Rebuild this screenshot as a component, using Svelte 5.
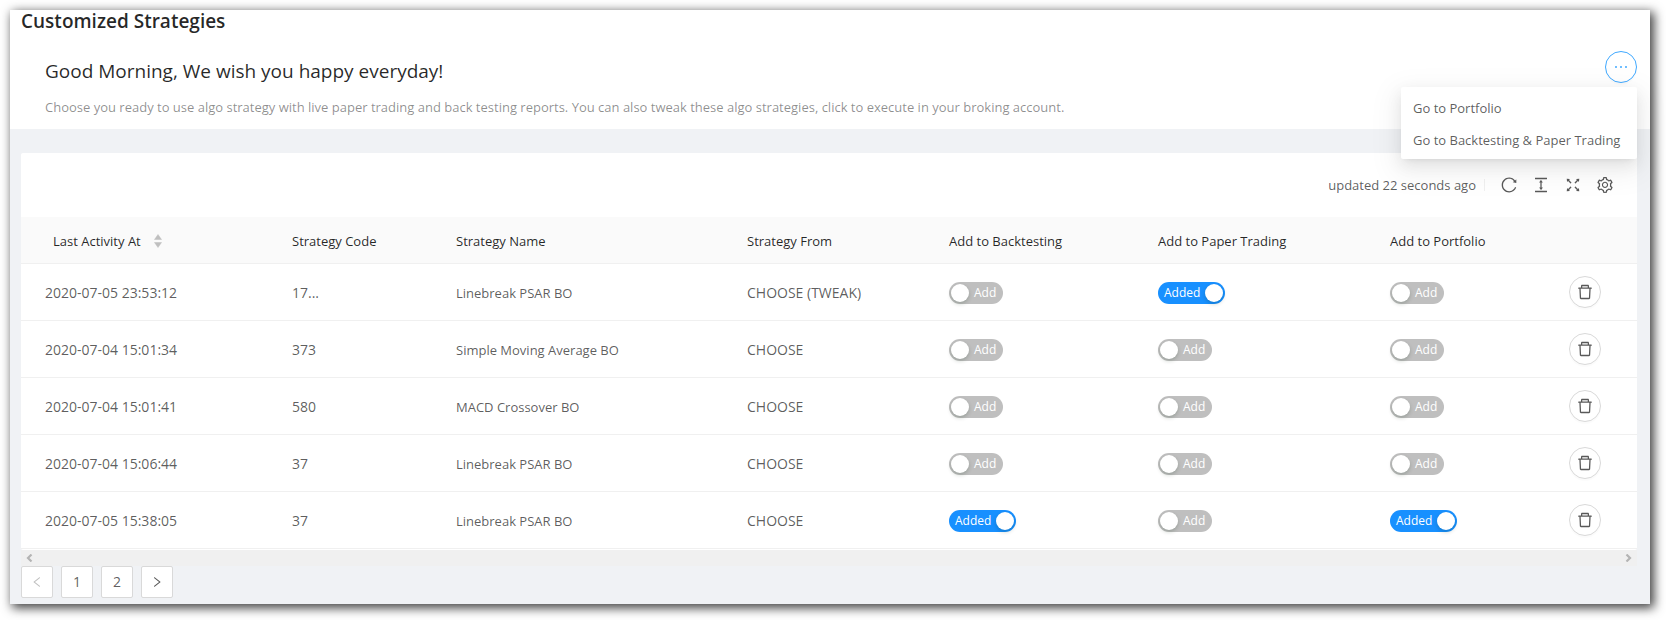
<script>
  const icons = {
    more: 'M176 511a56 56 0 10112 0 56 56 0 10-112 0zm280 0a56 56 0 10112 0 56 56 0 10-112 0zm280 0a56 56 0 10112 0 56 56 0 10-112 0z',
    trash: 'M360 184h-8c4.4 0 8-3.6 8-8v8h304v-8c0 4.4 3.6 8 8 8h-8v72h72v-80c0-35.3-28.7-64-64-64H352c-35.3 0-64 28.7-64 64v80h72v-72zm504 72H160c-17.7 0-32 14.3-32 32v32c0 4.4 3.6 8 8 8h60.4l24.7 523c1.6 34.1 29.8 61 63.9 61h454c34.2 0 62.3-26.8 63.9-61l24.7-523H888c4.4 0 8-3.6 8-8v-32c0-17.7-14.3-32-32-32zM731.3 840H292.7l-24.2-512h487l-24.2 512z',
    left: 'M724 218.3V141c0-6.7-7.7-10.4-12.9-6.3L260.3 486.8a31.86 31.86 0 000 50.3l450.8 352.1c5.3 4.1 12.9.4 12.9-6.3v-77.3c0-4.9-2.3-9.6-6.1-12.6l-360-281 360-281.1c3.8-3 6.1-7.7 6.1-12.6z',
    right: 'M765.7 486.8L314.9 134.7A7.97 7.97 0 00302 141v77.3c0 4.9 2.3 9.6 6.1 12.6l360 281.1-360 281.1c-3.9 3-6.1 7.7-6.1 12.6V883c0 6.7 7.7 10.4 12.9 6.3l450.8-352.1a31.96 31.96 0 000-50.4z'
  };

  const tools = [
    { label: 'Reload', d: 'M909.1 209.3l-56.4 44.1C775.8 155.1 656.2 92 521.9 92 290 92 102.3 279.5 102 511.5 101.7 743.7 289.8 932 521.9 932c181.3 0 335.8-115 394.6-276.1 1.5-4.2-.7-8.9-4.9-10.3l-56.7-19.5a8 8 0 00-10.1 4.8c-1.8 5-3.8 10-5.9 14.9-17.3 41-42.1 77.8-73.7 109.4A344.77 344.77 0 01655.9 829c-42.3 17.9-87.4 27-133.8 27-46.5 0-91.5-9.1-133.8-27A341.5 341.5 0 01279 755.2a342.16 342.16 0 01-73.7-109.4c-17.9-42.4-27-87.4-27-133.9s9.1-91.5 27-133.9c17.3-41 42.1-77.8 73.7-109.4 31.6-31.6 68.4-56.4 109.3-73.8 42.3-17.9 87.4-27 133.8-27 46.5 0 91.5 9.1 133.8 27a341.5 341.5 0 01109.3 73.8c9.9 9.9 19.2 20.4 27.8 31.4l-60.2 47a8 8 0 003 14.1l175.6 43c5 1.2 9.9-2.6 9.9-7.7l.8-180.9c-.1-6.6-7.8-10.3-13-6.2z' },
    { label: 'Density', d: 'M840 836H184c-4.4 0-8 3.6-8 8v60c0 4.4 3.6 8 8 8h656c4.4 0 8-3.6 8-8v-60c0-4.4-3.6-8-8-8zm0-724H184c-4.4 0-8 3.6-8 8v60c0 4.4 3.6 8 8 8h656c4.4 0 8-3.6 8-8v-60c0-4.4-3.6-8-8-8zM610.8 378c6 0 9.4-7 5.7-11.7L515.7 238.7a7.14 7.14 0 00-11.3 0L403.6 366.3a7.23 7.23 0 005.7 11.7H476v268h-62.8c-6 0-9.4 7-5.7 11.7l100.8 127.5c2.9 3.7 8.5 3.7 11.3 0l100.8-127.5c3.7-4.7.4-11.7-5.7-11.7H548V378h62.8z' },
    { label: 'Full screen', d: 'M290 236.4l43.9-43.9a8.01 8.01 0 00-4.7-13.6L169 160c-5.1-.6-9.5 3.7-8.9 8.9L179 329.1c.8 6.6 8.9 9.4 13.6 4.7l43.7-43.7L370 423.7c3.1 3.1 8.2 3.1 11.3 0l42.4-42.3c3.1-3.1 3.1-8.2 0-11.3L290 236.4zm352.7 187.3c3.1 3.1 8.2 3.1 11.3 0l133.7-133.6 43.7 43.7a8.01 8.01 0 0013.6-4.7L863.9 169c.6-5.1-3.7-9.5-8.9-8.9L694.8 179c-6.6.8-9.4 8.9-4.7 13.6l43.9 43.9L600.3 370a8.03 8.03 0 000 11.3l42.4 42.4zM845 694.9c-.8-6.6-8.9-9.4-13.6-4.7l-43.7 43.7L654 600.3a8.03 8.03 0 00-11.3 0l-42.4 42.3a8.03 8.03 0 000 11.3L734 787.6l-43.9 43.9a8.01 8.01 0 004.7 13.6L855 864c5.1.6 9.5-3.7 8.9-8.9L845 694.9zm-463.7-94.6a8.03 8.03 0 00-11.3 0L236.3 733.9l-43.7-43.7a8.01 8.01 0 00-13.6 4.7L160.1 855c-.6 5.1 3.7 9.5 8.9 8.9L329.2 845c6.6-.8 9.4-8.9 4.7-13.6L290 787.6 423.7 654c3.1-3.1 3.1-8.2 0-11.3l-42.4-42.4z' },
    { label: 'Settings', d: 'M924.8 625.7l-65.5-56c3.1-19 4.7-38.4 4.7-57.8s-1.6-38.8-4.7-57.8l65.5-56a32.03 32.03 0 009.3-35.2l-.9-2.6a443.74 443.74 0 00-79.7-137.9l-1.8-2.1a32.12 32.12 0 00-35.1-9.5l-81.3 28.9c-30-24.6-63.5-44-99.7-57.6l-15.7-85a32.05 32.05 0 00-25.8-25.7l-2.7-.5c-52.1-9.4-106.9-9.4-159 0l-2.7.5a32.05 32.05 0 00-25.8 25.7l-15.8 85.4a351.86 351.86 0 00-99 57.4l-81.9-29.1a32 32 0 00-35.1 9.5l-1.8 2.1a446.02 446.02 0 00-79.7 137.9l-.9 2.6c-4.5 12.5-.8 26.5 9.3 35.2l66.3 56.6c-3.1 18.8-4.6 38-4.6 57.1 0 19.2 1.5 38.4 4.6 57.1L99 625.5a32.03 32.03 0 00-9.3 35.2l.9 2.6c18.1 50.4 44.9 96.9 79.7 137.9l1.8 2.1a32.12 32.12 0 0035.1 9.5l81.9-29.1c29.8 24.5 63.1 43.9 99 57.4l15.8 85.4a32.05 32.05 0 0025.8 25.7l2.7.5a449.4 449.4 0 00159 0l2.7-.5a32.05 32.05 0 0025.8-25.7l15.7-85a350 350 0 0099.7-57.6l81.3 28.9a32 32 0 0035.1-9.5l1.8-2.1c34.8-41.1 61.6-87.5 79.7-137.9l.9-2.6c4.5-12.3.8-26.3-9.3-35zM788.3 465.9c2.5 15.1 3.8 30.6 3.8 46.1s-1.3 31-3.8 46.1l-6.6 40.1 74.7 63.9a370.03 370.03 0 01-42.6 73.6L721 702.8l-31.4 25.8c-23.9 19.6-50.5 35-79.3 45.8l-38.1 14.3-17.9 97a377.5 377.5 0 01-85 0l-17.9-97.2-37.8-14.5c-28.5-10.8-55-26.2-78.7-45.7l-31.4-25.9-93.4 33.2c-17-22.9-31.2-47.6-42.6-73.6l75.5-64.5-6.5-40c-2.4-14.9-3.7-30.3-3.7-45.5 0-15.3 1.2-30.6 3.7-45.5l6.5-40-75.5-64.5c11.3-26.1 25.6-50.7 42.6-73.6l93.4 33.2 31.4-25.9c23.7-19.5 50.2-34.9 78.7-45.7l37.9-14.3 17.9-97.2c28.1-3.2 56.8-3.2 85 0l17.9 97 38.1 14.3c28.7 10.8 55.4 26.2 79.3 45.8l31.4 25.8 92.8-32.9c17 22.9 31.2 47.6 42.6 73.6L781.8 426l6.5 39.9zM512 326c-97.2 0-176 78.8-176 176s78.8 176 176 176 176-78.8 176-176-78.8-176-176-176zm79.2 255.2A111.6 111.6 0 01512 614c-29.9 0-58-11.7-79.2-32.8A111.6 111.6 0 01400 502c0-29.9 11.7-58 32.8-79.2C454 401.6 482.1 390 512 390c29.9 0 58 11.6 79.2 32.8A111.6 111.6 0 01624 502c0 29.9-11.7 58-32.8 79.2z' }
  ];

  const targets = ['Backtesting', 'Paper Trading', 'Portfolio'];

  let rows = $state([
    { at: '2020-07-05 23:53:12', code: '17...', name: 'Linebreak PSAR BO', from: 'CHOOSE (TWEAK)', added: [false, true, false] },
    { at: '2020-07-04 15:01:34', code: '373', name: 'Simple Moving Average BO', from: 'CHOOSE', added: [false, false, false] },
    { at: '2020-07-04 15:01:41', code: '580', name: 'MACD Crossover BO', from: 'CHOOSE', added: [false, false, false] },
    { at: '2020-07-04 15:06:44', code: '37', name: 'Linebreak PSAR BO', from: 'CHOOSE', added: [false, false, false] },
    { at: '2020-07-05 15:38:05', code: '37', name: 'Linebreak PSAR BO', from: 'CHOOSE', added: [true, false, true] }
  ]);
  let menuOpen = $state(true);
</script>

{#snippet icon(d, size)}
  <svg viewBox="64 64 896 896" width={size} height={size} fill="currentColor" aria-hidden="true"><path {d} /></svg>
{/snippet}

<div class="page">
  <main class="frame">
    <header class="top">
      <h1>Customized Strategies</h1>
      <div class="intro">
        <div class="greeting">
          <h2>Good Morning, We wish you happy everyday!</h2>
          <p>Choose you ready to use algo strategy with live paper trading and back testing reports. You can also tweak these algo strategies, click to execute in your broking account.</p>
        </div>
        <div class="more">
          <button class="round blue" aria-label="More" aria-expanded={menuOpen} onclick={() => (menuOpen = !menuOpen)}>
            {@render icon(icons.more, 16)}
          </button>
          {#if menuOpen}
            <nav class="menu">
              <a href="#portfolio">Go to Portfolio</a>
              <a href="#backtesting">Go to Backtesting &amp; Paper Trading</a>
            </nav>
          {/if}
        </div>
      </div>
    </header>

    <section class="card">
      <div class="toolbar">
        <span>updated 22 seconds ago</span>
        <span class="divider"></span>
        <div class="tools">
          {#each tools as tool}
            <button class="tool" aria-label={tool.label}>{@render icon(tool.d, 16)}</button>
          {/each}
        </div>
      </div>

      <table>
        <colgroup>
          <col class="c-at" /><col class="c-code" /><col class="c-name" /><col class="c-from" />
          <col class="c-back" /><col class="c-paper" /><col class="c-port" /><col class="c-act" />
        </colgroup>
        <thead>
          <tr>
            <th>
              <button class="sort">
                Last Activity At
                <svg width="8" height="14" viewBox="0 0 8 14" fill="#bfbfbf" aria-hidden="true">
                  <path d="M4 0.5 7.5 5.5H.5zM4 13.5 .5 8.5h7z" stroke="#bfbfbf" stroke-width=".5" stroke-linejoin="round" />
                </svg>
              </button>
            </th>
            <th>Strategy Code</th>
            <th>Strategy Name</th>
            <th>Strategy From</th>
            {#each targets as target}<th>Add to {target}</th>{/each}
            <th></th>
          </tr>
        </thead>
        <tbody>
          {#each rows as row}
            <tr>
              <td class="figure">{row.at}</td>
              <td class="figure">{row.code}</td>
              <td>{row.name}</td>
              <td class="figure">{row.from}</td>
              {#each targets as target, i}
                <td>
                  <label class="switch" class:on={row.added[i]}>
                    <input type="checkbox" role="switch" bind:checked={row.added[i]} />
                    <span class="knob"></span>
                    <span class="state">{row.added[i] ? 'Added' : 'Add'}</span>
                  </label>
                </td>
              {/each}
              <td class="action"><button class="round" aria-label="Delete">{@render icon(icons.trash, 16)}</button></td>
            </tr>
          {/each}
        </tbody>
      </table>
    </section>

    <div class="scrollbar">
      <button aria-label="Scroll left"><svg width="8" height="8" viewBox="0 0 8 8" fill="none" stroke="currentColor" stroke-width="2.200" aria-hidden="true"><path d="M6.500 .5 3 4 6.500 7.500" /></svg></button>
      <button aria-label="Scroll right"><svg width="8" height="8" viewBox="0 0 8 8" fill="none" stroke="currentColor" stroke-width="2.200" aria-hidden="true"><path d="M1.500 .5 5 4 1.500 7.500" /></svg></button>
    </div>

    <nav class="pager" aria-label="Pages">
      <button disabled aria-label="Previous page">{@render icon(icons.left, 12)}</button>
      <button>1</button>
      <button>2</button>
      <button aria-label="Next page">{@render icon(icons.right, 12)}</button>
    </nav>
  </main>
</div>

<style>
  :global(body) {
    background: #fff;
  }
  .page {
    padding: 10px 16px 16px 10px;
    font: 13px/22px 'Open Sans', 'Noto Sans', sans-serif;
    color: rgba(0, 0, 0, 0.65);
  }
  button {
    margin: 0;
    padding: 0;
    border: 0;
    background: none;
    font: inherit;
    color: inherit;
    cursor: pointer;
  }
  svg {
    display: block;
  }
  .frame {
    padding-bottom: 6px;
    background: #f0f2f5;
    box-shadow: 3px 3px 10px 1px rgba(0, 0, 0, 0.75);
  }
  .top {
    padding: 0 13px 11px 11px;
    background: #fff;
  }
  h1 {
    margin: 0;
    font-size: 19px;
    line-height: 22px;
    font-weight: 600;
    color: rgba(0, 0, 0, 0.85);
  }
  .intro {
    display: flex;
    justify-content: space-between;
    padding: 19px 0 0 24px;
  }
  h2 {
    margin: 6px 0 11px;
    font-size: 19px;
    line-height: 28px;
    font-weight: 400;
    color: rgba(0, 0, 0, 0.85);
  }
  p {
    margin: 0;
    color: rgba(0, 0, 0, 0.45);
  }
  .more {
    position: relative;
  }
  .round {
    display: flex;
    align-items: center;
    justify-content: center;
    box-sizing: border-box;
    width: 32px;
    height: 32px;
    border: 1px solid #d9d9d9;
    border-radius: 50%;
    background: #fff;
    box-shadow: 0 2px 0 rgba(0, 0, 0, 0.016);
  }
  .blue {
    border-color: #40a9ff;
    color: #40a9ff;
  }
  .menu {
    position: absolute;
    z-index: 1;
    top: 36px;
    right: 0;
    min-width: 236px;
    padding: 4px 0;
    border-radius: 2px;
    background: #fff;
    box-shadow: 0 3px 6px -4px rgba(0, 0, 0, 0.12), 0 6px 16px rgba(0, 0, 0, 0.08), 0 9px 28px 8px rgba(0, 0, 0, 0.05);
    white-space: nowrap;
  }
  .menu a {
    display: block;
    padding: 6px 12px 4px;
    color: inherit;
    text-decoration: none;
  }
  .card {
    margin: 24px 13px 1px 11px;
    border-radius: 2px;
    background: #fff;
    box-shadow: 0 1px #fff;
  }
  .toolbar {
    display: flex;
    align-items: center;
    justify-content: flex-end;
    height: 64px;
    padding: 0 24px;
  }
  .divider {
    width: 1px;
    height: 12px;
    margin: 0 16px 0 8px;
    background: #f0f0f0;
  }
  .tools {
    display: flex;
    gap: 16px;
  }
  table {
    width: 100%;
    table-layout: fixed;
    border-collapse: separate;
    border-spacing: 0;
  }
  .c-at { width: 263px; }
  .c-code { width: 164px; }
  .c-name { width: 291px; }
  .c-from { width: 202px; }
  .c-back { width: 209px; }
  .c-paper { width: 232px; }
  .c-port { width: 179px; }
  .c-act { width: 76px; }
  th,
  td {
    padding: 13px 8px 11px;
    border-bottom: 1px solid #f0f0f0;
    text-align: left;
  }
  th {
    background: #fafafa;
    font-weight: 400;
    color: rgba(0, 0, 0, 0.85);
  }
  th:first-child,
  td:first-child {
    padding-left: 24px;
  }
  .figure {
    font-size: 14px;
  }
  .action {
    padding: 12px 8px;
  }
  .sort {
    display: flex;
    align-items: center;
    gap: 13px;
    padding-left: 8px;
  }
  .switch {
    position: relative;
    display: flex;
    align-items: center;
    gap: 5px;
    box-sizing: border-box;
    width: fit-content;
    height: 22px;
    padding: 0 7px 0 2px;
    border-radius: 11px;
    background: #bfbfbf;
    font-size: 12px;
    color: #fff;
    cursor: pointer;
  }
  .switch.on {
    flex-direction: row-reverse;
    padding: 0 2px 0 6px;
    background: #1890ff;
  }
  .switch input {
    position: absolute;
    inset: 0;
    margin: 0;
    opacity: 0;
  }
  .knob {
    width: 18px;
    height: 18px;
    border-radius: 50%;
    background: #fff;
    box-shadow: 0 2px 4px rgba(0, 35, 11, 0.2);
  }
  .scrollbar {
    display: flex;
    align-items: center;
    justify-content: space-between;
    height: 16px;
    margin: 0 13px 0 11px;
    padding: 0 4px;
    background: #f0f0f0;
    color: #b4b4b4;
  }
  .pager {
    display: flex;
    gap: 8px;
    margin: 0 11px;
  }
  .pager button {
    display: flex;
    align-items: center;
    justify-content: center;
    box-sizing: border-box;
    width: 32px;
    height: 32px;
    border: 1px solid #d9d9d9;
    border-radius: 2px;
    background: #fff;
    font-size: 14px;
  }
  .pager button:disabled {
    color: rgba(0, 0, 0, 0.25);
    cursor: default;
  }
</style>
